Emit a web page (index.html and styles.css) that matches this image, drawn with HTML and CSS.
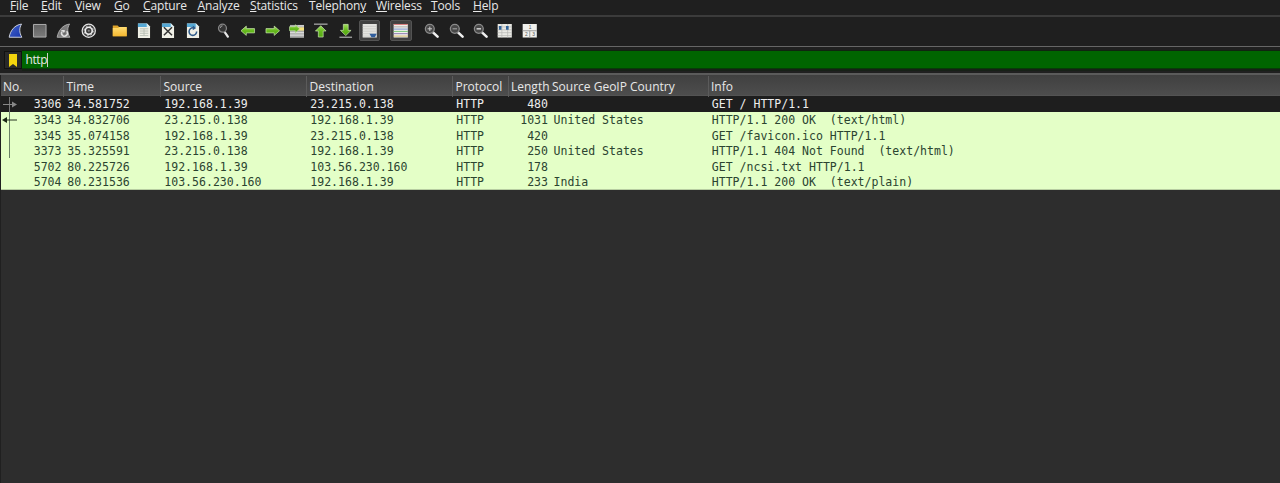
FILE: index.html
```
<!DOCTYPE html>
<html lang="en">
<head>
<meta charset="utf-8">
<title>Packet capture</title>
<link rel="stylesheet" href="styles.css">
</head>
<body>
<svg class="defs" aria-hidden="true">
  <defs>
    <linearGradient id="blue" x1="0" y1="0" x2="1" y2="1"><stop offset="0" stop-color="#4565c8"/><stop offset="1" stop-color="#1635ae"/></linearGradient>
    <linearGradient id="gray" x1="0" y1="0" x2="0" y2="1"><stop offset="0" stop-color="#606060"/><stop offset="1" stop-color="#7b7b7b"/></linearGradient>
    <linearGradient id="green" x1="0" y1="0" x2="0" y2="1"><stop offset="0" stop-color="#a2dc5c"/><stop offset=".5" stop-color="#65b91c"/><stop offset="1" stop-color="#55a914"/></linearGradient>
    <linearGradient id="gold" x1="0" y1="0" x2="0" y2="1"><stop offset="0" stop-color="#ffdc72"/><stop offset="1" stop-color="#f4b72f"/></linearGradient>
    <symbol id="page" viewBox="0 0 16 16"><path d="M2 .5h9.5l3 3v12H2z" fill="#f0f0e6"/><path d="M2 .5h9.5V4H2z" fill="#56a9d5"/><path d="M11 .5v3.400h3.500z" fill="#d9eef5"/></symbol>
    <symbol id="lens" viewBox="0 0 16 16"><path d="m9.300 9.600 4.700 4.500" stroke="#f0f0f0" stroke-width="2.600" stroke-linecap="round"/><circle cx="6" cy="6" r="4.600" fill="#484848" stroke="#8b8b8b" stroke-width="1.300"/></symbol>
  </defs>
</svg>
<main class="window">
  <nav class="menu">
    <span><u>F</u>ile</span><span><u>E</u>dit</span><span><u>V</u>iew</span><span><u>G</u>o</span><span><u>C</u>apture</span><span><u>A</u>nalyze</span><span><u>S</u>tatistics</span><span>Telephon<u>y</u></span><span><u>W</u>ireless</span><span><u>T</u>ools</span><span><u>H</u>elp</span>
  </nav>
  <div class="toolbar">
    <div class="group">
      <i><svg viewBox="0 0 16 16"><path d="M1.2 14.7C2.500 7.500 7 2 14 1.100c-2.600 4-2.400 9 .3 13.600z" fill="url(#blue)" stroke="#ced3dc"/></svg></i>
      <i><svg viewBox="0 0 16 16"><path d="M1.500 1.500h13v13h-13z" fill="url(#gray)" stroke="#b0b0b0"/></svg></i>
      <i><svg viewBox="0 0 16 16"><path d="M1.2 14.7C2.500 7.500 7 2 14 1.100c-2.600 4-2.400 9 .3 13.600z" fill="#7c7c7c" stroke="#aaa"/><path d="M11 8.500A3 3 0 1 1 6.200 9" fill="none" stroke="#ddd" stroke-width="1.600"/><path d="M5 7.300h4v3.800z" fill="#ddd"/><circle cx="8.700" cy="10.500" r="1" fill="#666"/></svg></i>
      <i><svg viewBox="0 0 16 16"><circle cx="8" cy="8" r="6.800" fill="#3b3b3b" stroke="#e4e4e4" stroke-width="1.300"/><circle cx="8" cy="8" r="3.600" fill="none" stroke="#ededed" stroke-width="1.700"/><circle cx="8" cy="8" r="4.800" fill="none" stroke="#ededed" stroke-width=".8" stroke-dasharray="1.800 1.970"/><circle cx="8" cy="8" r="1.100" fill="#888"/></svg></i>
    </div>
    <div class="group">
      <i><svg viewBox="0 0 16 16"><path d="M.8 2.700h5l1.700 1.800h7.700v9.300H.8z" fill="#dfa42a"/><path d="M.8 5.200h5.400l1.400-1h7.600v9.600H.8z" fill="url(#gold)"/></svg></i>
      <i><svg viewBox="0 0 16 16"><use href="#page"/><path d="M4 6h8.700M4 8.300h8.700M4 10.600h8.700M4 13h8.700M8.300 6v7" stroke="#b4bcb1" stroke-width=".9"/></svg></i>
      <i><svg viewBox="0 0 16 16"><use href="#page"/><path d="m4 4.300 8.400 8.400m0-8.400L4 12.700" stroke="#333" stroke-width="1.500"/></svg></i>
      <i><svg viewBox="0 0 16 16"><use href="#page"/><path d="M12 8.800A3.900 3.900 0 1 1 8.400 5" fill="none" stroke="#315c8b" stroke-width="1.600"/><path d="m8 2.500 3.600 2.600L8 7.500z" fill="#315c8b"/></svg></i>
    </div>
    <div class="group">
      <i><svg viewBox="0 0 16 16"><path d="m9 9.500 3.200 4.600" stroke="#e8e8e8" stroke-width="2.300" stroke-linecap="round"/><circle cx="6.700" cy="5.300" r="4.100" fill="#343434" stroke="#858585" stroke-width="1.300"/><path d="M4.500 5A2.200 2.200 0 0 1 6.700 2.900" fill="none" stroke="#aaa"/></svg></i>
      <i><svg viewBox="0 0 16 16"><path d="m1 8 5.500-4.800v2.600H15v4.400H6.500v2.600z" fill="url(#green)" stroke="#cbe6b4" stroke-width=".7"/></svg></i>
      <i><svg viewBox="0 0 16 16"><path d="M15 8 9.500 3.200v2.600H1v4.400h8.500v2.600z" fill="url(#green)" stroke="#cbe6b4" stroke-width=".7"/></svg></i>
      <i><svg viewBox="0 0 16 16"><path d="M1 2h14.500v13.300H1z" fill="#aaa"/><path d="M1 10h14.500M1 12.500h14.500M9 3h6.500" stroke="#e4e4e4"/><path d="M9 4.500h6.500v3.300H9z" fill="#f5e27c"/><path d="M11 6 6.500 1.800v2H.5V8h6v2.200z" fill="url(#green)" stroke="#cbe6b4" stroke-width=".6"/></svg></i>
      <i><svg viewBox="0 0 16 16"><path d="M1 1.200h14" stroke="#aaa" stroke-width="1.300"/><path d="M8 2.800 2.500 8.300h3v6.200h5V8.300h3z" fill="url(#green)" stroke="#cbe6b4" stroke-width=".7"/></svg></i>
      <i><svg viewBox="0 0 16 16"><path d="M1.500 14.700h13" stroke="#aaa" stroke-width="1.300"/><path d="M8 13 2.500 7.600h3V1.400h5v6.200h3z" fill="url(#green)" stroke="#cbe6b4" stroke-width=".7"/></svg></i>
      <i class="on"><svg viewBox="0 0 16 16"><path d="M.7 1h14.600v14H.7z" fill="#e4e4e0"/><path d="M.7 3.500h14.600M.7 6h14.600M.7 8.500h14.600M.7 11h14.600M.7 13.500h14.600" stroke="#c5c5c0" stroke-width=".7"/><path d="M7.700 11h7.500l-2 3.600H9.800z" fill="#315f9e"/></svg></i>
    </div>
    <div class="group">
      <i class="on"><svg viewBox="0 0 16 16"><path d="M.7 1h14.600v14H.7z" fill="#efefeb"/><path d="M.7 1.500h14.600" stroke="#d97979"/><path d="M.7 4h14.600" stroke="#aaa"/><path d="M.7 6.300h14.600" stroke="#7a93ce"/><path d="M.7 8.700h14.600" stroke="#79c779"/><path d="M.7 11h14.600" stroke="#8a79ae"/><path d="M.7 13.500h14.600" stroke="#d5b967"/></svg></i>
    </div>
    <div class="group">
      <i><svg viewBox="0 0 16 16"><use href="#lens"/><path d="M3.700 6h4.600M6 3.700v4.600" stroke="#ccc" stroke-width="1"/></svg></i>
      <i><svg viewBox="0 0 16 16"><use href="#lens"/><path d="M3.700 6h4.600" stroke="#aaa" stroke-width="1"/></svg></i>
      <i><svg viewBox="0 0 16 16"><use href="#lens"/><path d="M3.700 6h4.600" stroke="#ccc" stroke-width="1.600"/></svg></i>
      <i><svg viewBox="0 0 16 16"><path d="M.7 1h14.600v14H.7z" fill="#e9e9e4"/><path d="M.7 4h14.600M.7 7h14.600M.7 10h14.600M.7 13h14.600M5 1v14M11 1v14" stroke="#b4b4b0" stroke-width=".7"/><path d="M2 3h2.600v4H2zm7.300 0H12v4H9.300z" fill="#326398"/></svg></i>
      <i><svg viewBox="0 0 16 16"><path d="M.7 1h14.600v14H.7z" fill="#f0f0ec"/><path d="M.7 8h14.600M8 8v7" stroke="#999"/><g class="num"><text x="7" y="6.500">1</text><text x="3" y="13.700">2</text><text x="10.500" y="13.700">3</text></g></svg></i>
    </div>
  </div>
  <div class="filter">
    <div class="bookmark"><svg viewBox="0 0 8 13"><path d="M0 0h8v13L4 10l-4 3z" fill="#f2d30d"/></svg></div>
    <div class="query">http<b></b></div>
  </div>
  <section class="packets">
    <div class="row head"><span>No.</span><span>Time</span><span>Source</span><span>Destination</span><span>Protocol</span><span>Length</span><span>Source GeoIP Country</span><span>Info</span></div>
    <div class="row selected"><span>3306</span><span>34.581752</span><span>192.168.1.39</span><span>23.215.0.138</span><span>HTTP</span><span>480</span><span></span><span>GET / HTTP/1.1</span></div>
    <div class="row"><span>3343</span><span>34.832706</span><span>23.215.0.138</span><span>192.168.1.39</span><span>HTTP</span><span>1031</span><span>United States</span><span>HTTP/1.1 200 OK  (text/html)</span></div>
    <div class="row"><span>3345</span><span>35.074158</span><span>192.168.1.39</span><span>23.215.0.138</span><span>HTTP</span><span>420</span><span></span><span>GET /favicon.ico HTTP/1.1</span></div>
    <div class="row"><span>3373</span><span>35.325591</span><span>23.215.0.138</span><span>192.168.1.39</span><span>HTTP</span><span>250</span><span>United States</span><span>HTTP/1.1 404 Not Found  (text/html)</span></div>
    <div class="row"><span>5702</span><span>80.225726</span><span>192.168.1.39</span><span>103.56.230.160</span><span>HTTP</span><span>178</span><span></span><span>GET /ncsi.txt HTTP/1.1</span></div>
    <div class="row last"><span>5704</span><span>80.231536</span><span>103.56.230.160</span><span>192.168.1.39</span><span>HTTP</span><span>233</span><span>India</span><span>HTTP/1.1 200 OK  (text/plain)</span></div>
    <svg class="stream" viewBox="0 0 20 64" fill="none"><path d="M9.500 1v15" stroke="#777"/><path d="M9.500 16v46" stroke="#698066"/><path d="M3 8.500h10" stroke="#888"/><path d="m12 5.500 5 3-5 3z" fill="#888"/><path d="M6 24h11" stroke="#263522"/><path d="m7 21-5 3 5 3z" fill="#172514"/></svg>
  </section>
</main>
</body>
</html>
```
FILE: styles.css
```
* { box-sizing: border-box; }
body { margin: 0; background: #2d2d2d; color: #e8e8e8; font: 12px/16px "Open Sans", "Noto Sans", sans-serif; }
.defs { position: absolute; width: 0; height: 0; }
.window { height: 483px; display: flex; flex-direction: column; }

.menu { height: 15px; flex: none; padding-left: 10px; background: #1f1f1f; display: grid; grid-template-columns: 31px 34px 39px 29px 54.500px 52.500px 59px 67px 55px 42px 60px; line-height: 12px; white-space: nowrap; letter-spacing: -.15px; }
.menu u { text-underline-offset: 1px; text-decoration-thickness: 1px; }

.toolbar { height: 32px; flex: none; border-top: 2px solid #3b3b3b; border-bottom: 1px solid #666; background: #1f1f1f; display: flex; gap: 7px; padding: 0 0 2px 3.300px; align-items: center; }
.group { display: flex; align-items: center; }
.group i { width: 24.300px; height: 22px; display: flex; align-items: center; justify-content: center; }
.group svg { width: 15.500px; height: 15.500px; fill: none; }
.group .on { width: 21.300px; height: 21px; margin: 0 1.500px; background: #414141; border: 1px solid #535353; border-radius: 2px; }
.num { fill: #555; font: 5px "Liberation Sans", sans-serif; }

.filter { height: 28px; flex: none; padding: 4px 0 0 4px; background: #202020; border-bottom: 2px solid #5b5b5b; display: flex; }
.bookmark { width: 18px; height: 18px; display: flex; align-items: center; justify-content: center; background: #292929; border: 1px solid #111; }
.bookmark svg { width: 8px; height: 13px; }
.query { flex: 1; height: 18px; padding-left: 3.500px; background: #006500; border-bottom: 1px solid #073d07; display: flex; align-items: center; line-height: 19px; letter-spacing: -.4px; box-shadow: 0 -1px #102510, 0 2px #172017; }
.query b { width: 1px; height: 14px; background: #ccc; }

.packets { position: relative; flex: 1; border-left: 1px solid #202020; }
.row { height: 15.500px; display: grid; grid-template-columns: 62px 97px 146px 146px 56px 41.500px 158px 1fr; background: #e4ffc7; color: #2b4430; font: 11.540px/16.500px "DejaVu Sans Mono", monospace; white-space: pre; }
.row span { padding-left: 4.300px; }
.row:not(.head) span:first-child, .row:not(.head) span:nth-child(6) { text-align: right; padding: 0 1.500px 0 0; }
.row:not(.head) span:nth-child(7) { padding-left: 4px; }
.row.last { border-bottom: 1px solid #b7cda1; }
.row.head { height: 21px; padding-top: 1px; border-bottom: 1px solid #535353; background: linear-gradient(#404040, #4d4d4d); color: #e8e8e8; font: 12px/21px "Open Sans", "Noto Sans", sans-serif; }
.head span { padding-left: 2.500px; border-left: 1px solid #5b5b5b; }
.head span:first-child { padding-left: 2px; border-left: 0; }
.head span:nth-child(6) { padding-left: 2px; }
.head span:nth-child(7) { padding-left: 2.500px; border-left: 0; }
.row.selected { height: 16px; background: #1e1e1e; color: #ededed; line-height: 16px; }
.stream { position: absolute; left: -1px; top: 21px; width: 20px; height: 64px; }
```
